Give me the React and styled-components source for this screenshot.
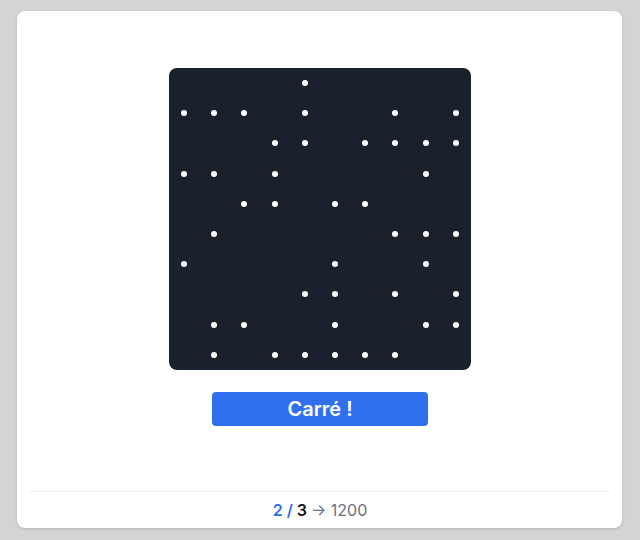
import React from "react";
import styled, { createGlobalStyle } from "styled-components";

const GlobalStyle = createGlobalStyle`
  html, body {
    margin: 0;
    padding: 0;
    background: #d4d4d4;
    font-family: Inter, "Noto Sans", sans-serif;
  }
`;

const Page = styled.div`
  width: 640px;
  height: 540px;
  box-sizing: border-box;
  padding: 11px 18px 12px 17px;
`;

const Card = styled.div`
  height: 100%;
  background: #ffffff;
  border-radius: 8px;
  box-shadow: 0 1px 3px rgba(0, 0, 0, 0.15);
  display: flex;
  flex-direction: column;
  padding: 0 12px 0 13px;
  box-sizing: border-box;
`;

const Main = styled.div`
  flex: 1;
  display: flex;
  flex-direction: column;
  align-items: center;
  padding-top: 57px;
  gap: 22px;
`;

const Board = styled.div`
  width: 302px;
  height: 302px;
  background: #1a202c;
  border-radius: 8px;
  display: grid;
  grid-template-columns: repeat(10, 1fr);
  grid-template-rows: repeat(10, 1fr);
`;

const Cell = styled.div`
  display: flex;
  align-items: center;
  justify-content: center;
`;

const Dot = styled.span`
  width: 6px;
  height: 6px;
  border-radius: 50%;
  background: #ffffff;
`;

const Button = styled.button`
  width: 216px;
  height: 34px;
  border: none;
  border-radius: 4px;
  background: #3070ee;
  color: #ffffff;
  font-family: Inter, "Noto Sans", sans-serif;
  font-size: 20px;
  font-weight: 600;
  cursor: pointer;
`;

const Footer = styled.div`
  height: 36px;
  border-top: 1px solid #eeeeee;
  display: flex;
  align-items: center;
  justify-content: center;
  font-size: 16px;
  gap: 4px;
`;

const Current = styled.span`
  color: #2f6fed;
  font-weight: 600;
`;

const Total = styled.span`
  color: #111111;
  font-weight: 600;
`;

const Target = styled.span`
  color: #6b7280;
`;

const dots = [
  [4],
  [0, 1, 2, 4, 7, 9],
  [3, 4, 6, 7, 8, 9],
  [0, 1, 3, 8],
  [2, 3, 5, 6],
  [1, 7, 8, 9],
  [0, 5, 8],
  [4, 5, 7, 9],
  [1, 2, 5, 8, 9],
  [1, 3, 4, 5, 6, 7],
];

export default function App() {
  const cells = [];
  for (let r = 0; r < 10; r++) {
    for (let c = 0; c < 10; c++) {
      cells.push(
        <Cell key={r + "-" + c}>{dots[r].includes(c) && <Dot />}</Cell>
      );
    }
  }
  return (
    <Page>
      <GlobalStyle />
      <Card>
        <Main>
          <Board>{cells}</Board>
          <Button>Carré !</Button>
        </Main>
        <Footer>
          <Current>2 /</Current>
          <Total>3</Total>
          <Target>→ 1200</Target>
        </Footer>
      </Card>
    </Page>
  );
}
